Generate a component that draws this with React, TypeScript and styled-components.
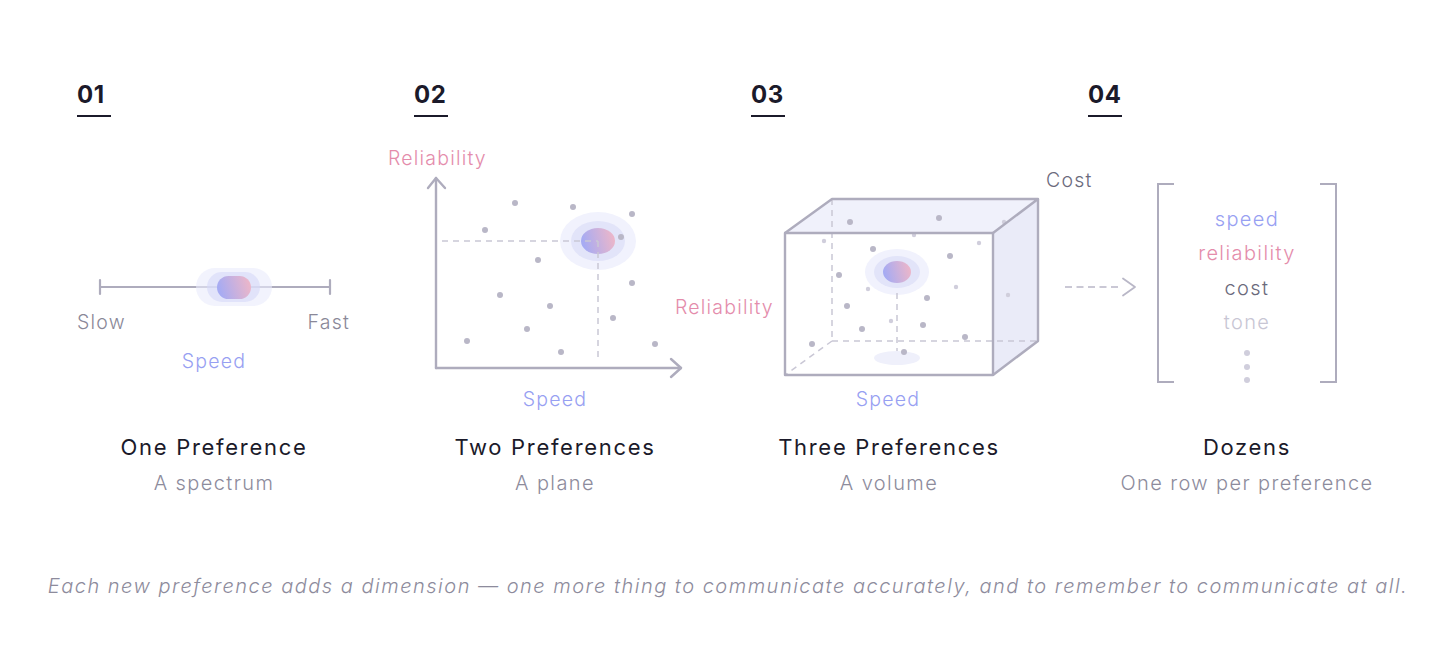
import React from "react";
import styled, { createGlobalStyle } from "styled-components";

const C = {
  ink: "#1b1a2a",
  sub: "#8d8b9c",
  label: "#8a8898",
  cost: "#6b6a7c",
  blue: "#97a0f2",
  pink: "#e48cab",
  axis: "#aeacbd",
  dot: "#b9b7c7",
  dotLight: "#d0cedc",
  dash: "#c9c7d5",
  tone: "#c8c6d4",
};

const FONT = `"Inter", "Noto Sans", sans-serif`;

const GlobalStyle = createGlobalStyle`
  html, body { margin: 0; padding: 0; background: #ffffff; }
  body { font-family: ${FONT}; -webkit-font-smoothing: antialiased; }
`;

const Page = styled.main`
  width: 1456px;
  height: 651px;
  box-sizing: border-box;
  padding-top: 81px;
  display: flex;
  flex-direction: column;
  overflow: hidden;
`;

const Steps = styled.section`
  display: grid;
  grid-template-columns: repeat(4, 337px);
  padding-left: 77px;
`;

const Step = styled.div`
  display: flex;
  flex-direction: column;
  align-items: flex-start;
`;

const StepNumber = styled.div`
  width: 34px;
  font-size: 24px;
  line-height: 28px;
  font-weight: 700;
  color: ${C.ink};
  padding-bottom: 6px;
  border-bottom: 2.5px solid ${C.ink};
  letter-spacing: 0.5px;
`;

const Figure = styled.div`
  height: 316px;
  width: 337px;
  display: flex;
  align-items: flex-start;
  overflow: visible;
`;

const Drawing = styled.svg`
  display: block;
  overflow: visible;
  font-family: ${FONT};
`;

const Caption = styled.div<{ $span: number }>`
  width: ${(p) => p.$span}px;
  display: flex;
  flex-direction: column;
  align-items: center;
  gap: 8px;
  white-space: nowrap;
`;

const Title = styled.h2`
  margin: 0;
  font-size: 22px;
  line-height: 28px;
  font-weight: 400;
  color: ${C.ink};
  letter-spacing: 1.7px;
`;

const Subtitle = styled.p`
  margin: 0;
  font-size: 20px;
  line-height: 28px;
  font-weight: 300;
  color: ${C.sub};
  letter-spacing: 1.4px;
`;

const Footnote = styled.p`
  margin: 75px 0 0;
  text-align: center;
  font-size: 20px;
  line-height: 28px;
  font-weight: 300;
  font-style: italic;
  color: ${C.sub};
  letter-spacing: 1.5px;
`;

/* ---- Dozens panel ---- */
const VectorFigure = styled(Figure)`
  padding-top: 66px;
  box-sizing: border-box;
`;

const Arrow = styled.svg`
  display: block;
  margin-left: -23px;
  margin-top: 94px;
  margin-right: 20px;
  overflow: visible;
`;

const Vector = styled.div`
  display: flex;
  height: 200px;
  width: 180px;
`;

const Bracket = styled.div<{ $side: "left" | "right" }>`
  width: 17px;
  box-sizing: border-box;
  border: 2.5px solid ${C.axis};
  ${(p) => (p.$side === "left" ? "border-right: none;" : "border-left: none;")}
`;

const Rows = styled.ul`
  flex: 1;
  list-style: none;
  margin: 0;
  padding: 19px 0 0;
  display: flex;
  flex-direction: column;
  align-items: center;
`;

const Row = styled.li<{ $color: string }>`
  font-size: 20px;
  line-height: 34.3px;
  font-weight: 300;
  color: ${(p) => p.$color};
  letter-spacing: 1.4px;
`;

const Ellipsis = styled.div`
  margin-top: 11px;
  display: flex;
  flex-direction: column;
  gap: 7.5px;
`;

const EllipsisDot = styled.span`
  width: 6px;
  height: 6px;
  border-radius: 50%;
  background: ${C.dotLight};
`;

const Label: React.FC<{
  x: number;
  y: number;
  color: string;
  anchor?: "start" | "middle" | "end";
  children: React.ReactNode;
}> = ({ x, y, color, anchor = "start", children }) => (
  <text
    x={x}
    y={y}
    fill={color}
    fontSize={19.5}
    fontWeight={300}
    letterSpacing={1.2}
    textAnchor={anchor}
  >
    {children}
  </text>
);

const BlobGradient: React.FC<{ id: string }> = ({ id }) => (
  <defs>
    <linearGradient id={id} x1="0" y1="0.3" x2="1" y2="0.1">
      <stop offset="0" stopColor="#a6abf3" />
      <stop offset="1" stopColor="#f1b7c6" />
    </linearGradient>
  </defs>
);

const Dots: React.FC<{ pts: [number, number][]; r: number; fill: string }> = ({
  pts,
  r,
  fill,
}) => (
  <g fill={fill}>
    {pts.map(([x, y], i) => (
      <circle key={i} cx={x} cy={y} r={r} />
    ))}
  </g>
);

const SpectrumDrawing = () => (
  <Drawing width={337} height={316} viewBox="77 117 337 316">
    <BlobGradient id="g1" />
    <g stroke={C.axis} strokeWidth={2.2} strokeLinecap="round">
      <line x1={100} y1={287} x2={330} y2={287} />
      <line x1={100} y1={280} x2={100} y2={294} />
      <line x1={330} y1={280} x2={330} y2={294} />
    </g>
    <rect x={196} y={268} width={76} height={38} rx={19} fill="#e9ebfc" opacity={0.6} />
    <rect x={207} y={272} width={53} height={30} rx={15} fill="#d6d9f8" opacity={0.6} />
    <rect x={217} y={276} width={34} height={23} rx={11.5} fill="url(#g1)" />
    <Label x={77} y={329} color={C.label}>Slow</Label>
    <Label x={350} y={329} color={C.label} anchor="end">Fast</Label>
    <Label x={214} y={368} color={C.blue} anchor="middle">Speed</Label>
  </Drawing>
);

const planeDots: [number, number][] = [
  [515, 203], [573, 207], [632, 214], [485, 230], [621, 237], [538, 260],
  [632, 283], [500, 295], [550, 306], [613, 318], [527, 329], [467, 341],
  [561, 352], [655, 344],
];

const PlaneDrawing = () => (
  <Drawing width={337} height={316} viewBox="414 117 337 316">
    <BlobGradient id="g2" />
    <ellipse cx={598} cy={241} rx={38} ry={29} fill="#f1f2fd" />
    <ellipse cx={598} cy={241} rx={27} ry={20} fill="#e2e4f9" />
    <ellipse cx={598} cy={241} rx={17} ry={13} fill="url(#g2)" />
    <g stroke={C.dash} strokeWidth={1.5} strokeDasharray="6 5">
      <line x1={442} y1={241} x2={598} y2={241} />
      <line x1={598} y1={241} x2={598} y2={362} />
    </g>
    <Dots pts={planeDots} r={3} fill={C.dot} />
    <g stroke={C.axis} strokeWidth={2.4} strokeLinecap="round" strokeLinejoin="round" fill="none">
      <line x1={436} y1={178} x2={436} y2={368} />
      <polyline points="428,188 436,178 445,188" />
      <line x1={436} y1={368} x2={681} y2={368} />
      <polyline points="671,359 681,368 671,377" />
    </g>
    <Label x={388} y={165} color={C.pink}>Reliability</Label>
    <Label x={555} y={406} color={C.blue} anchor="middle">Speed</Label>
  </Drawing>
);

const bigDots: [number, number][] = [
  [850, 222], [939, 218], [873, 249], [950, 256], [839, 275], [927, 298],
  [847, 306], [862, 329], [923, 325], [965, 337], [812, 344],
];
const smallDots: [number, number][] = [
  [1004, 222], [914, 235], [824, 241], [979, 243], [868, 289], [956, 287],
  [1008, 295], [891, 321],
];

const VolumeDrawing = () => (
  <Drawing width={337} height={316} viewBox="751 117 337 316">
    <BlobGradient id="g3" />
    <polygon points="785,233 832,199 1038,199 993,233" fill="#f0f1fb" />
    <polygon points="993,233 1038,199 1038,341 993,375" fill="#eaebf8" />
    <g stroke={C.dash} strokeWidth={1.5} strokeDasharray="6 5" fill="none">
      <line x1={832} y1={199} x2={832} y2={341} />
      <line x1={832} y1={341} x2={1038} y2={341} />
      <line x1={832} y1={341} x2={785} y2={375} />
    </g>
    <Dots pts={smallDots} r={2.2} fill={C.dotLight} />
    <Dots pts={bigDots} r={3} fill={C.dot} />
    <ellipse cx={897} cy={272} rx={32} ry={23} fill="#f1f2fd" />
    <ellipse cx={897} cy={272} rx={23} ry={16} fill="#e2e4f9" />
    <ellipse cx={897} cy={272} rx={14} ry={11} fill="url(#g3)" />
    <line x1={897} y1={293} x2={897} y2={351} stroke={C.dash} strokeWidth={1.5} strokeDasharray="6 5" />
    <ellipse cx={897} cy={358} rx={23} ry={7} fill="#eff0fb" />
    <circle cx={904} cy={352} r={3} fill={C.dot} />
    <g stroke={C.axis} strokeWidth={2.4} strokeLinejoin="round" fill="none">
      <rect x={785} y={233} width={208} height={142} />
      <polyline points="785,233 832,199 1038,199 993,233" />
      <polyline points="1038,199 1038,341 993,375" />
    </g>
    <Label x={675} y={314} color={C.pink}>Reliability</Label>
    <Label x={1046} y={187} color={C.cost}>Cost</Label>
    <Label x={888} y={406} color={C.blue} anchor="middle">Speed</Label>
  </Drawing>
);

const DozensFigure = () => (
  <VectorFigure>
    <Arrow width={72} height={20} viewBox="0 0 72 20">
      <line x1={0} y1={10} x2={54} y2={10} stroke={C.dot} strokeWidth={1.6} strokeDasharray="7 4.5" />
      <polyline
        points="58,1.5 70,10 58,18.5"
        fill="none"
        stroke={C.dot}
        strokeWidth={1.8}
        strokeLinecap="round"
        strokeLinejoin="round"
      />
    </Arrow>
    <Vector>
      <Bracket $side="left" />
      <Rows>
        <Row $color={C.blue}>speed</Row>
        <Row $color={C.pink}>reliability</Row>
        <Row $color={C.cost}>cost</Row>
        <Row $color={C.tone}>tone</Row>
        <Ellipsis>
          <EllipsisDot />
          <EllipsisDot />
          <EllipsisDot />
        </Ellipsis>
      </Rows>
      <Bracket $side="right" />
    </Vector>
  </VectorFigure>
);

const steps = [
  { n: "01", title: "One Preference", sub: "A spectrum", span: 274, fig: <Figure><SpectrumDrawing /></Figure> },
  { n: "02", title: "Two Preferences", sub: "A plane", span: 282, fig: <Figure><PlaneDrawing /></Figure> },
  { n: "03", title: "Three Preferences", sub: "A volume", span: 276, fig: <Figure><VolumeDrawing /></Figure> },
  { n: "04", title: "Dozens", sub: "One row per preference", span: 318, fig: <DozensFigure /> },
];

export default function App() {
  return (
    <>
      <GlobalStyle />
      <Page>
        <Steps>
          {steps.map((s) => (
            <Step key={s.n}>
              <StepNumber>{s.n}</StepNumber>
              {s.fig}
              <Caption $span={s.span}>
                <Title>{s.title}</Title>
                <Subtitle>{s.sub}</Subtitle>
              </Caption>
            </Step>
          ))}
        </Steps>
        <Footnote>
          Each new preference adds a dimension — one more thing to communicate accurately, and to
          remember to communicate at all.
        </Footnote>
      </Page>
    </>
  );
}
